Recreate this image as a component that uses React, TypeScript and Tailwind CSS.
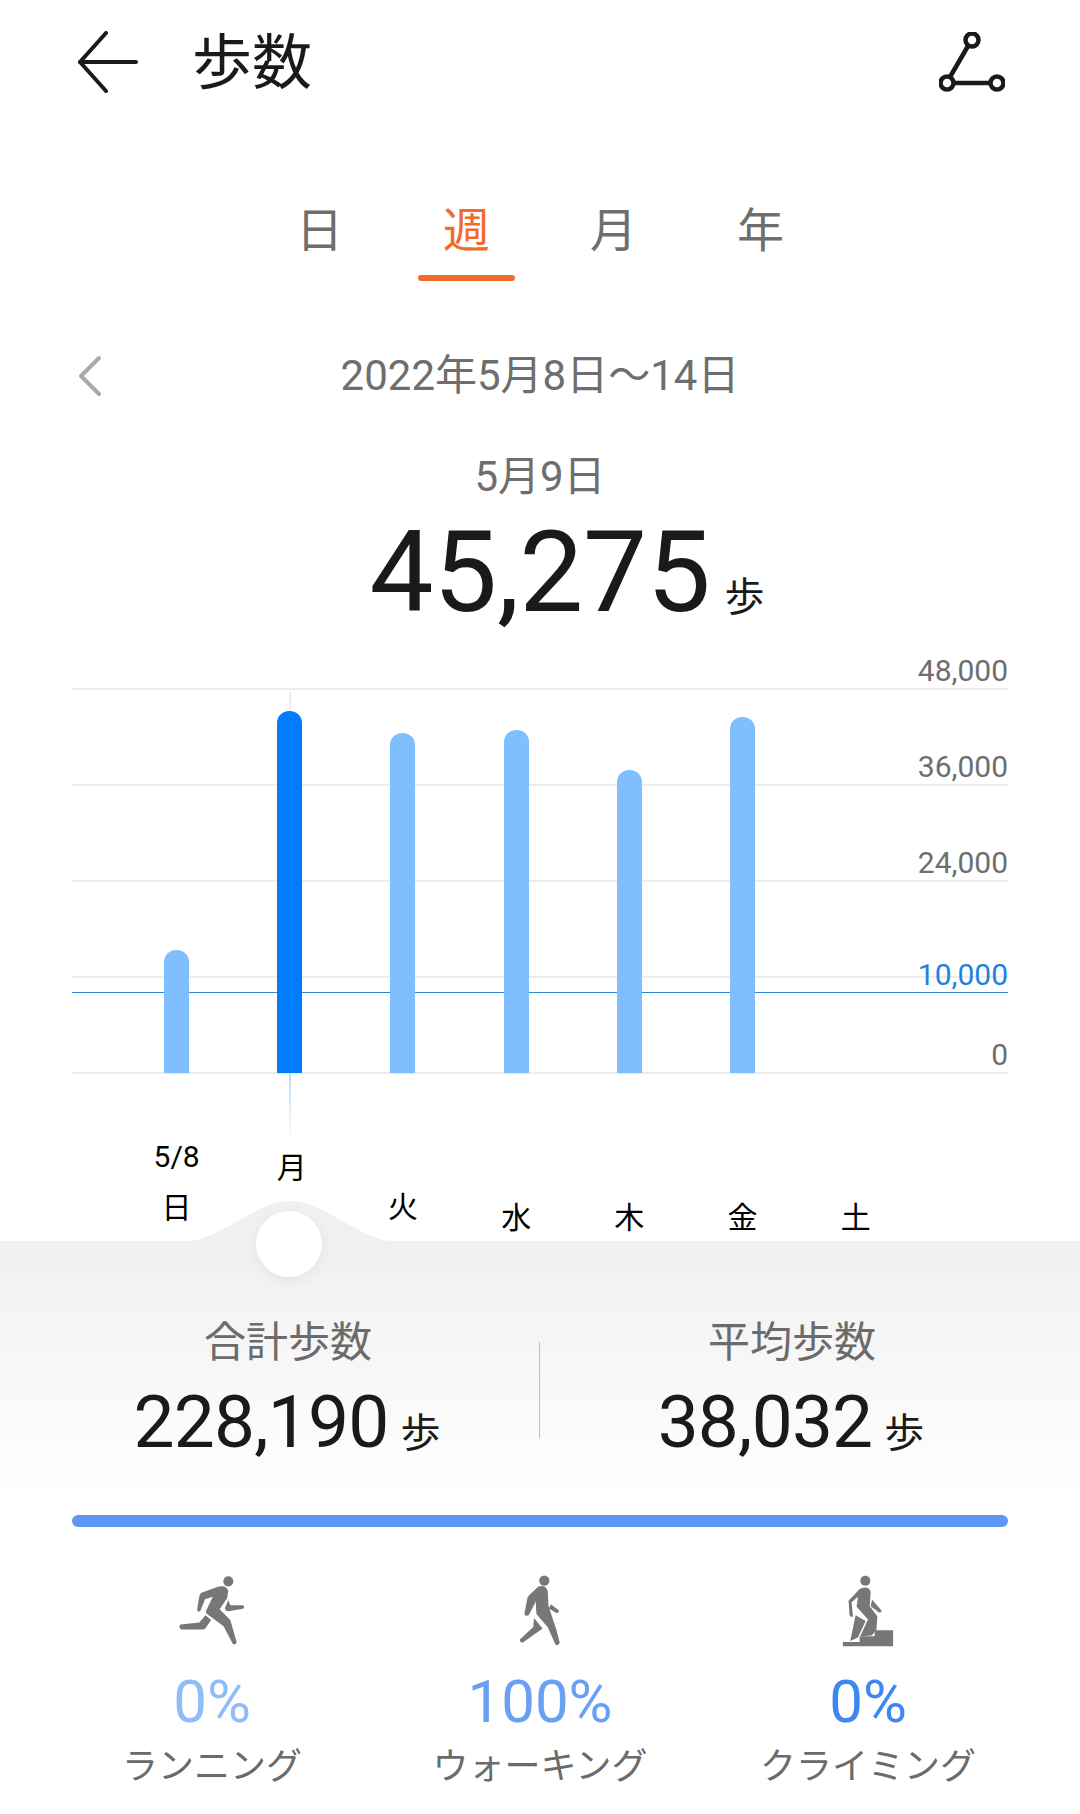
import React from "react";

const font = "font-['Roboto','Noto_Sans_CJK_JP',sans-serif]";

const bars = [
  { day: "日", height: 123, active: false },
  { day: "月", height: 362, active: true },
  { day: "火", height: 340, active: false },
  { day: "水", height: 343, active: false },
  { day: "木", height: 303, active: false },
  { day: "金", height: 356, active: false },
  { day: "土", height: 0, active: false },
];

function RunIcon() {
  return (
    <svg width="70" height="74" viewBox="175 75 205 220" fill="#777">
      <circle cx="326" cy="97" r="15" />
      <path d="M248 130 L295 113 Q320 106 326 125 L322 148 L300 180 L332 212 L351 279 Q346 288 339 282 L312 230 L260 192 Q258 186 262 180 L280 143 L257 150 L243 184 Q236 190 233 182 L240 140 Q242 133 248 130 Z" />
      <path d="M326 152 L332 168 L370 168 Q376 174 370 178 L326 186 Q316 184 316 176 Z" />
      <path d="M258 198 L275 212 L258 236 Q255 240 250 240 L186 240 Q176 232 184 225 L240 219 Z" />
    </svg>
  );
}

function WalkIcon() {
  return (
    <svg width="44" height="74" viewBox="120 50 125 215" fill="#777">
      <circle cx="195" cy="69" r="15" />
      <path d="M178 86 Q200 80 205 100 L207 142 L230 212 L240 250 Q234 262 227 254 L205 205 L172 166 L170 130 L150 170 Q142 174 137 166 L146 120 Q148 114 152 110 Z" />
      <path d="M214 138 L237 155 Q238 164 230 163 L208 150 Z" />
      <path d="M165 178 L190 208 L133 249 Q124 250 124 240 L163 204 Z" />
    </svg>
  );
}

function ClimbIcon() {
  return (
    <svg width="52" height="72" viewBox="248 75 154 215" fill="#777">
      <circle cx="317" cy="92" r="15" />
      <path d="M300 117 Q325 105 333 125 L330 168 L353 198 L350 240 L336 256 L302 258 L325 208 L291 170 L295 140 L276 156 L280 198 Q273 202 270 196 L267 152 Z" />
      <path d="M337 148 L366 182 Q364 190 357 186 L333 168 Z" />
      <path d="M288 195 L318 212 L295 262 L272 272 Z" />
      <path d="M345 240 L400 240 L400 288 L250 288 L250 275 L300 275 L300 258 L345 258 Z" />
    </svg>
  );
}

function Stat({ label, value }: { label: string; value: string }) {
  return (
    <div className="w-[432px] flex flex-col items-center">
      <div className="text-[42px] leading-[56px] text-[#6b6b6b]">{label}</div>
      <div className="flex items-baseline mt-[9px]">
        <span className="text-[73px] leading-[84px] tracking-[-0.8px] text-[#1a1a1a]">{value}</span>
        <span className="text-[40px] leading-none text-[#1a1a1a] ml-[12px] mr-[2px]">歩</span>
      </div>
    </div>
  );
}

function Activity({ icon, pct, label, color, className }: { icon: React.ReactNode; pct: string; label: string; color: string; className: string }) {
  return (
    <div className={`absolute top-0 w-[300px] flex flex-col items-center ${className}`}>
      <div className="h-[76px] flex items-center justify-center">{icon}</div>
      <div className={`text-[60px] leading-[68px] mt-[19px] ${color}`}>{pct}</div>
      <div className="text-[36px] leading-[50px] text-[#6b6b6b] mt-[6px]">{label}</div>
    </div>
  );
}

export default function App(): React.ReactElement {
  return (
    <div className={`w-[1080px] h-[1814px] bg-white overflow-hidden relative ${font}`}>
      {/* Header */}
      <div className="h-[124px] flex items-center pl-[78px] pr-[75px]">
        <svg width="60" height="62" viewBox="0 0 60 62" fill="none" stroke="#1a1a1a" strokeWidth="4" strokeLinecap="round" strokeLinejoin="round">
          <path d="M28 2 L2 31 L28 60" />
          <path d="M2 31 H58" />
        </svg>
        <div className="ml-[54px] mt-[4px] text-[60px] leading-none text-[#1a1a1a]">歩数</div>
        <svg className="ml-auto" width="66" height="60" viewBox="0 0 66 60" fill="none" stroke="#1a1a1a" strokeWidth="4.5">
          <circle cx="33" cy="8" r="6.5" />
          <circle cx="8" cy="51" r="6.5" />
          <circle cx="58" cy="51" r="6.5" />
          <path d="M29 14 L11 45 M15 51 H51" />
        </svg>
      </div>

      {/* Tabs */}
      <div className="h-[64px] mt-[75px] relative text-[47px] leading-[64px] text-[#6e6e6e]">
        <div className="flex justify-center">
          <span className="w-[147px] text-center">日</span>
          <span className="w-[147px] text-center text-[#f26a2c]">週</span>
          <span className="w-[147px] text-center">月</span>
          <span className="w-[147px] text-center">年</span>
        </div>
        <div className="absolute left-[418px] top-[76px] w-[97px] h-[6px] rounded-full bg-[#f26a2c]"></div>
      </div>

      {/* Date range */}
      <div className="h-[48px] mt-[89px] flex items-center pl-[78px] relative">
        <svg width="24" height="42" viewBox="0 0 24 42" fill="none" stroke="#a8a8a8" strokeWidth="4" strokeLinecap="round" strokeLinejoin="round">
          <path d="M21 3 L3 21 L21 39" />
        </svg>
        <div className="absolute left-0 w-[1080px] text-center text-[42px] leading-[48px] text-[#6e6e6e]">2022年5月8日～14日</div>
      </div>

      {/* Selected day */}
      <div className="mt-[53px] text-center text-[42px] leading-[48px] text-[#6e6e6e]">5月9日</div>
      <div className="flex items-baseline justify-center mt-[6px] ml-[54px]">
        <span className="text-[114px] leading-[130px] tracking-[-0.3px] text-[#1a1a1a]">45,275</span>
        <span className="text-[40px] leading-none text-[#1a1a1a] ml-[14px]">歩</span>
      </div>

      {/* Chart */}
      <div className="relative mx-[72px] h-[423px] mt-[13px] mb-[1px]">
        <div className="absolute inset-x-0 top-[38px] h-[2px] bg-[#ececec]"></div>
        <div className="absolute inset-x-0 top-[134px] h-[2px] bg-[#ececec]"></div>
        <div className="absolute inset-x-0 top-[230px] h-[2px] bg-[#ececec]"></div>
        <div className="absolute inset-x-0 top-[326px] h-[2px] bg-[#ececec]"></div>
        <div className="absolute inset-x-0 bottom-[-1px] h-[2px] bg-[#ececec]"></div>
        <div className="absolute inset-x-0 top-[342px] h-[1px] bg-[#2f86d8]"></div>
        <div className="absolute right-0 top-[3px] text-right text-[30px] leading-[36px] text-[#6e6e6e]">48,000</div>
        <div className="absolute right-0 top-[99px] text-right text-[30px] leading-[36px] text-[#6e6e6e]">36,000</div>
        <div className="absolute right-0 top-[195px] text-right text-[30px] leading-[36px] text-[#6e6e6e]">24,000</div>
        <div className="absolute right-0 top-[307px] text-right text-[30px] leading-[36px] text-[#1f80e0]">10,000</div>
        <div className="absolute right-0 top-[387px] text-right text-[30px] leading-[36px] text-[#6e6e6e]">0</div>
        <div className="absolute left-[217px] top-[42px] h-[20px] w-[2px] bg-[#e6eef8]"></div>
        <div className="absolute left-[217px] top-[423px] h-[68px] w-[2px] bg-gradient-to-b from-[#bcd8f2] to-white"></div>
        <div className="absolute inset-0 pl-[48px] grid grid-cols-[repeat(7,113.2px)] items-end">
          {bars.map((bar) => (
            <div key={bar.day} className="flex justify-center">
              {bar.height > 0 && (
                <div
                  className={`w-[25px] rounded-t-[12px] ${bar.active ? "bg-[#007dff]" : "bg-[#80bfff]"}`}
                  style={{ height: bar.height }}
                ></div>
              )}
            </div>
          ))}
        </div>
      </div>

      {/* Day labels */}
      <div className="h-[167px] pl-[120px] grid grid-cols-[repeat(7,113.2px)] text-[30px] leading-[36px] text-black text-center">
        <div className="pt-[65px]">
          <div>5/8</div>
          <div className="mt-[15px]">日</div>
        </div>
        <div className="pt-[76px] pl-[4px]">月</div>
        <div className="pt-[115px]">火</div>
        <div className="pt-[126px]">水</div>
        <div className="pt-[126px]">木</div>
        <div className="pt-[126px]">金</div>
        <div className="pt-[126px]">土</div>
      </div>

      {/* Grey panel */}
      <div className="relative h-[261px] bg-gradient-to-b from-[#f0f0f0] to-white">
        <svg className="absolute left-[180px] top-[-40px]" width="220" height="41" viewBox="0 0 220 41" fill="#f0f0f0">
          <path d="M0 41 C22 41 40 30 63 17 C80 7 95 0 110 0 C125 0 140 7 157 17 C180 30 198 41 220 41 Z" />
        </svg>
        <div className="absolute left-[256px] top-[-30px] w-[66px] h-[66px] rounded-full bg-white shadow-[0_4px_14px_rgba(0,0,0,0.06)]"></div>

        <div className="flex pt-[74px] pl-[72px]">
          <Stat label="合計歩数" value="228,190" />
          <div className="w-[1px] h-[96px] mt-[27px] ml-[35px] mr-[36px] bg-[#bdbdbd]"></div>
          <Stat label="平均歩数" value="38,032" />
        </div>
      </div>

      {/* Progress bar */}
      <div className="mx-[72px] mt-[13px] h-[12px] rounded-full bg-[#5e97f6]"></div>

      {/* Activities */}
      <div className="relative mt-[46px] h-[240px]">
        <Activity icon={<RunIcon />} pct="0%" label="ランニング" color="text-[#8fbdf8]" className="left-[62px]" />
        <Activity icon={<WalkIcon />} pct="100%" label="ウォーキング" color="text-[#6aa0f4]" className="left-[390px]" />
        <Activity icon={<ClimbIcon />} pct="0%" label="クライミング" color="text-[#3f87f0]" className="left-[718px]" />
      </div>
    </div>
  );
}
